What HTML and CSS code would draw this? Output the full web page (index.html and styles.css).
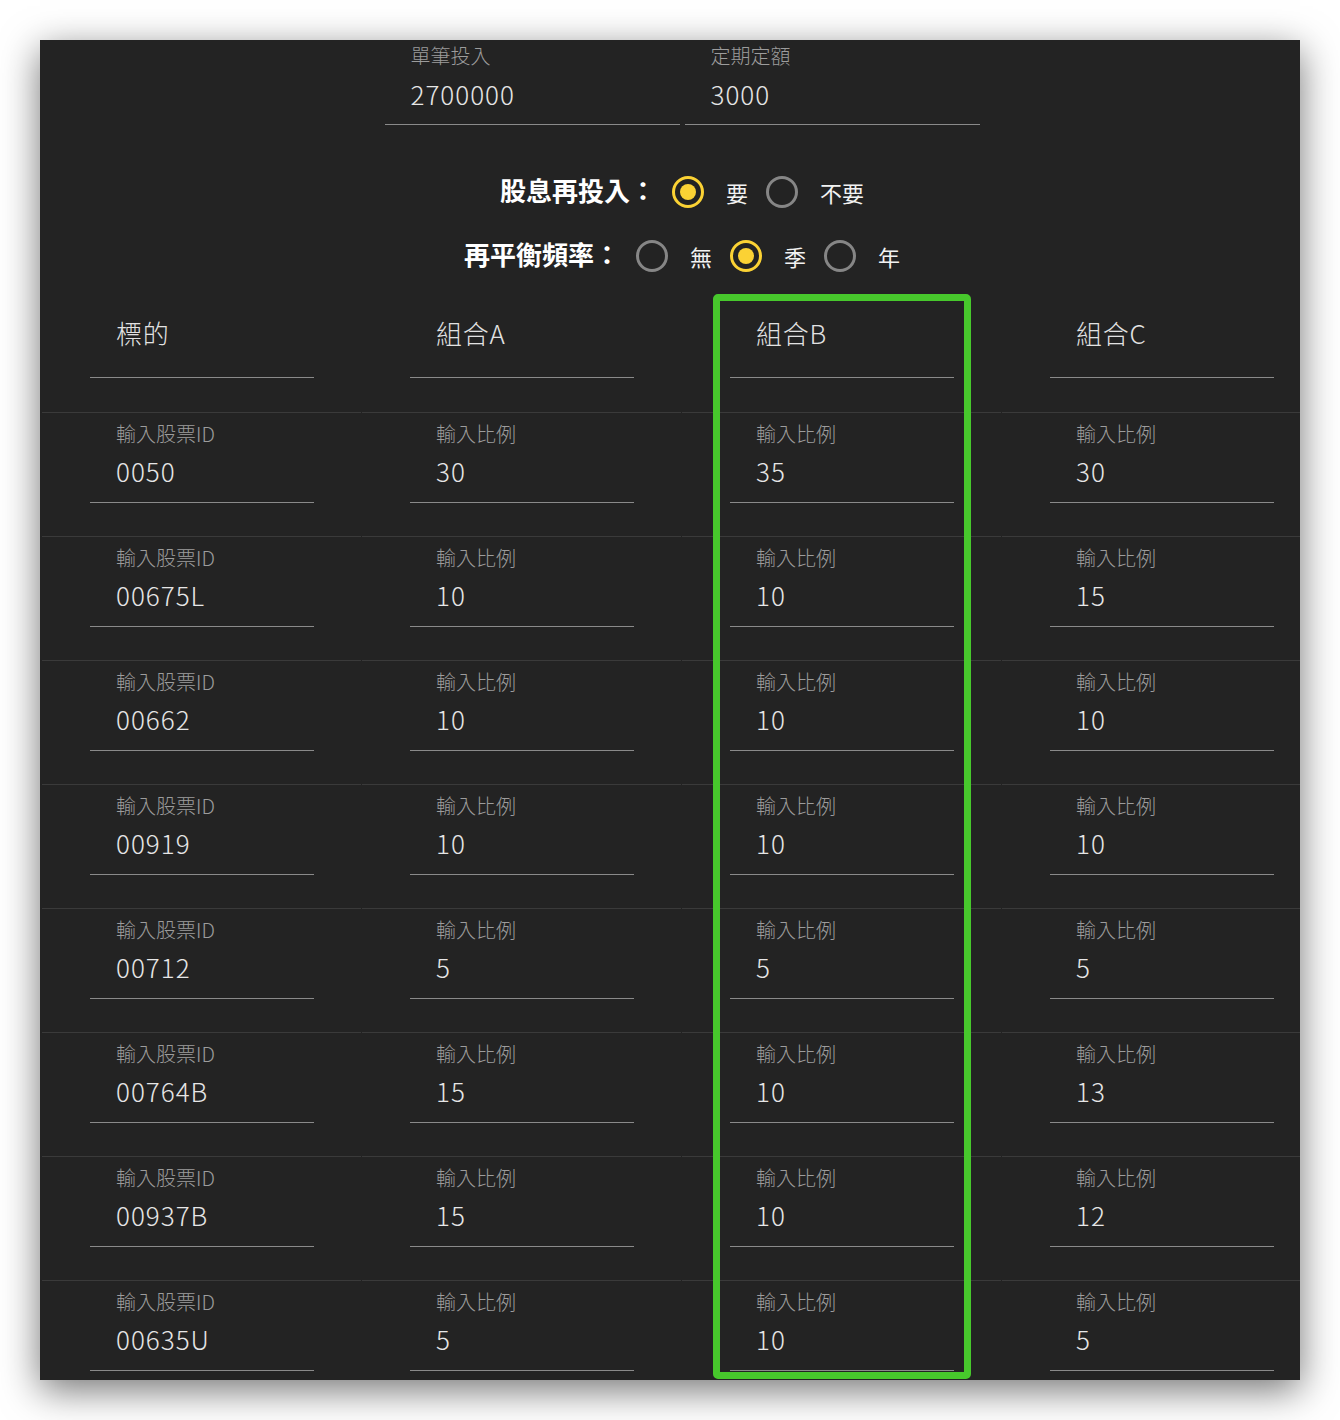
FILE: index.html
```html
<!DOCTYPE html>
<html lang="zh-Hant">
<head>
<meta charset="utf-8">
<title>投資組合</title>
<link rel="stylesheet" href="styles.css">
</head>
<body>
<div class="frame">
  <div class="panel">
    <div class="content">
      <div class="amounts">
        <div class="amount-field">
          <div class="amount-label">單筆投入</div>
          <div class="amount-value">2700000</div>
        </div>
        <div class="amount-field">
          <div class="amount-label">定期定額</div>
          <div class="amount-value">3000</div>
        </div>
      </div>

      <div class="options">
        <div class="opt-row">
          <span class="opt-title">股息再投入：</span>
          <span class="radio on"></span><span class="opt-label">要</span>
          <span class="radio"></span><span class="opt-label">不要</span>
        </div>
        <div class="opt-row">
          <span class="opt-title">再平衡頻率：</span>
          <span class="radio"></span><span class="opt-label">無</span>
          <span class="radio on"></span><span class="opt-label">季</span>
          <span class="radio"></span><span class="opt-label">年</span>
        </div>
      </div>

      <div class="table">
        <div class="head-cell"><div class="head-field">標的</div></div>
        <div class="head-cell"><div class="head-field">組合A</div></div>
        <div class="head-cell"><div class="head-field">組合B</div></div>
        <div class="head-cell"><div class="head-field">組合C</div></div>

        <div class="cell"><div class="field"><div class="label">輸入股票ID</div><div class="value">0050</div></div></div>
        <div class="cell"><div class="field"><div class="label">輸入比例</div><div class="value">30</div></div></div>
        <div class="cell"><div class="field"><div class="label">輸入比例</div><div class="value">35</div></div></div>
        <div class="cell"><div class="field"><div class="label">輸入比例</div><div class="value">30</div></div></div>

        <div class="cell"><div class="field"><div class="label">輸入股票ID</div><div class="value">00675L</div></div></div>
        <div class="cell"><div class="field"><div class="label">輸入比例</div><div class="value">10</div></div></div>
        <div class="cell"><div class="field"><div class="label">輸入比例</div><div class="value">10</div></div></div>
        <div class="cell"><div class="field"><div class="label">輸入比例</div><div class="value">15</div></div></div>

        <div class="cell"><div class="field"><div class="label">輸入股票ID</div><div class="value">00662</div></div></div>
        <div class="cell"><div class="field"><div class="label">輸入比例</div><div class="value">10</div></div></div>
        <div class="cell"><div class="field"><div class="label">輸入比例</div><div class="value">10</div></div></div>
        <div class="cell"><div class="field"><div class="label">輸入比例</div><div class="value">10</div></div></div>

        <div class="cell"><div class="field"><div class="label">輸入股票ID</div><div class="value">00919</div></div></div>
        <div class="cell"><div class="field"><div class="label">輸入比例</div><div class="value">10</div></div></div>
        <div class="cell"><div class="field"><div class="label">輸入比例</div><div class="value">10</div></div></div>
        <div class="cell"><div class="field"><div class="label">輸入比例</div><div class="value">10</div></div></div>

        <div class="cell"><div class="field"><div class="label">輸入股票ID</div><div class="value">00712</div></div></div>
        <div class="cell"><div class="field"><div class="label">輸入比例</div><div class="value">5</div></div></div>
        <div class="cell"><div class="field"><div class="label">輸入比例</div><div class="value">5</div></div></div>
        <div class="cell"><div class="field"><div class="label">輸入比例</div><div class="value">5</div></div></div>

        <div class="cell"><div class="field"><div class="label">輸入股票ID</div><div class="value">00764B</div></div></div>
        <div class="cell"><div class="field"><div class="label">輸入比例</div><div class="value">15</div></div></div>
        <div class="cell"><div class="field"><div class="label">輸入比例</div><div class="value">10</div></div></div>
        <div class="cell"><div class="field"><div class="label">輸入比例</div><div class="value">13</div></div></div>

        <div class="cell"><div class="field"><div class="label">輸入股票ID</div><div class="value">00937B</div></div></div>
        <div class="cell"><div class="field"><div class="label">輸入比例</div><div class="value">15</div></div></div>
        <div class="cell"><div class="field"><div class="label">輸入比例</div><div class="value">10</div></div></div>
        <div class="cell"><div class="field"><div class="label">輸入比例</div><div class="value">12</div></div></div>

        <div class="cell"><div class="field"><div class="label">輸入股票ID</div><div class="value">00635U</div></div></div>
        <div class="cell"><div class="field"><div class="label">輸入比例</div><div class="value">5</div></div></div>
        <div class="cell"><div class="field"><div class="label">輸入比例</div><div class="value">10</div></div></div>
        <div class="cell"><div class="field"><div class="label">輸入比例</div><div class="value">5</div></div></div>
      </div>
    </div>
    <div class="highlight"></div>
  </div>
</div>
</body>
</html>
```

FILE: styles.css
```css
html, body {
  margin: 0;
  padding: 0;
  background: #ffffff;
}

body {
  font-family: "Noto Sans CJK TC", "Noto Sans", sans-serif;
  font-weight: 300;
}

.frame {
  padding: 40px;
}

.panel {
  position: relative;
  width: 1260px;
  height: 1340px;
  background: #232323;
  overflow: hidden;
  box-shadow: 0 10px 36px rgba(0, 0, 0, 0.55);
}

.content {
  width: 1280px;
  margin-left: 2px;
}

/* top amount inputs */
.amounts {
  display: flex;
  justify-content: center;
  gap: 5px;
}

.amount-field {
  width: 295px;
  box-sizing: border-box;
  padding: 0 0 11px 26px;
  border-bottom: 1px solid #8a8a8a;
}

.amount-label {
  font-size: 20px;
  line-height: 32px;
  color: #9c9c9c;
}

.amount-value {
  margin-top: 3px;
  font-size: 26px;
  line-height: 38px;
  color: #e6e6e6;
  letter-spacing: 1px;
}

/* radio options */
.options {
  margin-top: 35px;
}

.opt-row {
  display: flex;
  justify-content: center;
  align-items: center;
  height: 64px;
}

.opt-title {
  font-size: 26px;
  font-weight: 700;
  color: #ffffff;
  margin-right: 16px;
  margin-bottom: 6px;
}

.radio {
  position: relative;
  width: 32px;
  height: 32px;
  box-sizing: border-box;
  border: 3px solid #868686;
  border-radius: 50%;
  margin-right: 22px;
  flex: none;
}

.radio.on {
  border-color: #fbd234;
}

.radio.on::after {
  content: "";
  position: absolute;
  left: 5px;
  top: 5px;
  width: 16px;
  height: 16px;
  border-radius: 50%;
  background: #fbd234;
}

.opt-label {
  font-size: 22px;
  font-weight: 400;
  color: #f2f2f2;
  margin-right: 18px;
}

.opt-label:last-child {
  margin-right: 0;
}

/* table */
.table {
  display: grid;
  grid-template-columns: repeat(4, 320px);
}

.head-cell {
  height: 124px;
  box-sizing: border-box;
  padding: 26px 48px 0 48px;
}

.head-field {
  padding: 0 0 25px 26px;
  border-bottom: 1px solid #8a8a8a;
  font-size: 26px;
  line-height: 38px;
  color: #e2e2e2;
  letter-spacing: 0.8px;
}

.cell {
  height: 124px;
  box-sizing: border-box;
  border-top: 1px solid #3a3a3a;
  margin-right: 1px;
  padding: 7px 47px 0 48px;
}

.field {
  padding: 0 0 12px 26px;
  border-bottom: 1px solid #8a8a8a;
}

.label {
  font-size: 20px;
  line-height: 28px;
  color: #9c9c9c;
}

.value {
  margin-top: 4px;
  font-size: 26px;
  line-height: 38px;
  color: #e6e6e6;
  letter-spacing: 1px;
}

/* annotation overlay */
.highlight {
  position: absolute;
  left: 673px;
  top: 254px;
  width: 258px;
  height: 1085px;
  box-sizing: border-box;
  border: 7px solid #47c82c;
  border-radius: 5px;
  pointer-events: none;
}
```
